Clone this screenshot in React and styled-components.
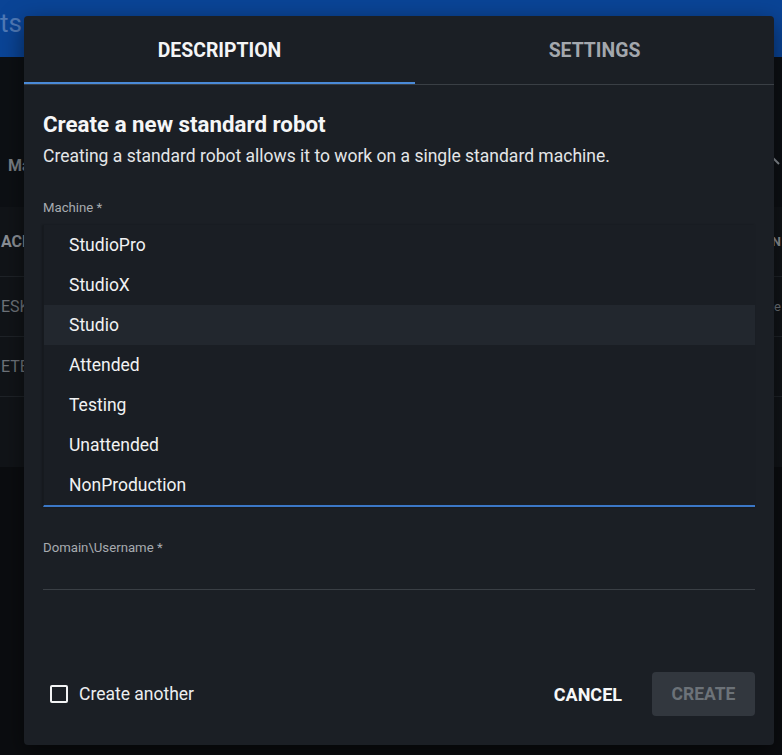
import React from 'react';
import styled, { createGlobalStyle } from 'styled-components';

const GlobalStyle = createGlobalStyle`
  html, body {
    margin: 0;
    padding: 0;
    background: #0b0d10;
    font-family: Roboto, "Liberation Sans", sans-serif;
    overflow: hidden;
  }
`;

const machines = ["StudioPro", "StudioX", "Studio", "Attended", "Testing", "Unattended", "NonProduction"];

// only the slivers of the page behind the dialog that stay visible
const App = () => {
  return (
    <Page>
      <GlobalStyle />
      <Backdrop>
        <Header>
          <HeaderTitle>ts</HeaderTitle>
        </Header>
        <Toolbar>
          <ToolbarText>Ma</ToolbarText>
          <Chevron>
            <svg width="10" height="16" viewBox="0 0 10 16">
              <path d="M1 5 L7 11" stroke="#8a9096" strokeWidth="2" fill="none" />
            </svg>
          </Chevron>
        </Toolbar>
        <Table>
          <Row header>
            <Cell header>ACH</Cell>
            <Cell header right>N</Cell>
          </Row>
          <Row>
            <Cell>ESK</Cell>
            <Cell right>e</Cell>
          </Row>
          <Row>
            <Cell>ETE</Cell>
            <Cell right></Cell>
          </Row>
          <TableFooter />
        </Table>
      </Backdrop>

      <Dialog>
        <Tabs>
          <Tab active>DESCRIPTION</Tab>
          <Tab>SETTINGS</Tab>
        </Tabs>
        <Body>
          <Title>Create a new standard robot</Title>
          <Subtitle>Creating a standard robot allows it to work on a single standard machine.</Subtitle>
          <Label>Machine *</Label>
          <Menu>
            {machines.map((m) => (
              <MenuItem key={m} selected={m === "Studio"}>{m}</MenuItem>
            ))}
          </Menu>
          <Label spaced>Domain\Username *</Label>
          <Input />
        </Body>
        <Footer>
          <CheckRow>
            <Box />
            <span>Create another</span>
          </CheckRow>
          <Actions>
            <TextButton>CANCEL</TextButton>
            <CreateButton>CREATE</CreateButton>
          </Actions>
        </Footer>
      </Dialog>
    </Page>
  );
};

export default App;

const Page = styled.div`
  position: relative;
  width: 782px;
  height: 755px;
  overflow: hidden;
`;

const Backdrop = styled.div`
  display: flex;
  flex-direction: column;
`;

const Header = styled.div`
  height: 57px;
  background: #0a4496;
  display: flex;
  align-items: center;
`;

const HeaderTitle = styled.div`
  margin-left: 0;
  font-size: 26px;
  color: #4f79b6;
  margin-top: -12px;
`;

const Toolbar = styled.div`
  height: 150px;
  background: #0d1014;
  display: flex;
  align-items: flex-end;
  justify-content: space-between;
  padding-bottom: 32px;
  box-sizing: border-box;
`;

const ToolbarText = styled.div`
  margin-left: 8px;
  font-size: 16px;
  font-weight: 700;
  color: #7b8087;
`;

const Chevron = styled.div`
  margin-bottom: 2px;
`;

const Table = styled.div`
  background: #111418;
  display: flex;
  flex-direction: column;
`;

const Row = styled.div`
  height: ${(p) => (p.header ? 69 : 59)}px;
  border-bottom: 1px solid #1f2328;
  display: flex;
  align-items: center;
  justify-content: space-between;
`;

const Cell = styled.div`
  font-size: ${(p) => (p.right ? 13 : 16)}px;
  font-weight: ${(p) => (p.header ? 700 : 400)};
  color: ${(p) => (p.header ? '#8c9197' : '#6f747a')};
  margin-left: ${(p) => (p.right ? '0' : '1px')};
  margin-right: ${(p) => (p.right ? '1px' : '0')};
`;

const TableFooter = styled.div`
  height: 70px;
`;

const Dialog = styled.div`
  position: absolute;
  left: 24px;
  top: 16px;
  width: 750px;
  height: 729px;
  background: #1b1f25;
  border-radius: 4px;
  box-shadow: 0 8px 24px rgba(0, 0, 0, 0.5);
  display: flex;
  flex-direction: column;
`;

const Tabs = styled.div`
  display: grid;
  grid-template-columns: 391px 1fr;
  border-bottom: 1px solid #3a3f45;
`;

const Tab = styled.div`
  height: 68px;
  display: flex;
  align-items: center;
  justify-content: center;
  font-size: 19.4px;
  font-weight: 700;
  color: ${(p) => (p.active ? '#f4f5f6' : '#a3a7ad')};
  border-bottom: 2px solid ${(p) => (p.active ? '#4a8ad8' : 'transparent')};
  box-sizing: border-box;
  padding-top: 2px;
`;

const Body = styled.div`
  padding: 27px 19px 0 19px;
  display: flex;
  flex-direction: column;
`;

const Title = styled.div`
  font-size: 22.3px;
  line-height: 24px;
  font-weight: 700;
  color: #f5f6f7;
  margin-bottom: 10px;
`;

const Subtitle = styled.div`
  font-size: 17.5px;
  line-height: 20px;
  color: #e4e6e8;
  margin-bottom: 34px;
`;

const Label = styled.div`
  font-size: 13.2px;
  line-height: 16px;
  color: #a7abb0;
  margin-top: ${(p) => (p.spaced ? '33px' : '0')};
  margin-bottom: 9px;
`;

const Menu = styled.div`
  display: flex;
  flex-direction: column;
  background: #1a1e24;
  border-left: 1px solid #161a1f;
  box-shadow: -1px 0 2px rgba(0, 0, 0, 0.25);
  border-bottom: 2px solid #3b77c6;
`;

const MenuItem = styled.div`
  height: 40px;
  display: flex;
  align-items: center;
  padding-left: 25px;
  font-size: 17.5px;
  color: #f1f2f3;
  background: ${(p) => (p.selected ? '#22272e' : 'transparent')};
`;

const Input = styled.div`
  height: 24px;
  border-bottom: 1px solid #3a3f45;
`;

const Footer = styled.div`
  margin-top: auto;
  padding: 0 19px 29px 26px;
  display: flex;
  align-items: center;
  justify-content: space-between;
`;

const CheckRow = styled.div`
  display: flex;
  align-items: center;
  gap: 11px;
  font-size: 17.5px;
  color: #eceef0;
`;

const Box = styled.div`
  width: 14px;
  height: 14px;
  border: 2px solid #f2f3f4;
  border-radius: 2px;
`;

const Actions = styled.div`
  display: flex;
  align-items: center;
  gap: 16px;
`;

const TextButton = styled.div`
  height: 44px;
  padding: 0 14px;
  display: flex;
  align-items: center;
  font-size: 18px;
  font-weight: 700;
  color: #f7f8f9;
`;

const CreateButton = styled.div`
  width: 103px;
  height: 44px;
  display: flex;
  align-items: center;
  justify-content: center;
  background: #32373e;
  border-radius: 4px;
  font-size: 17.5px;
  font-weight: 700;
  color: #6c7278;
`;
